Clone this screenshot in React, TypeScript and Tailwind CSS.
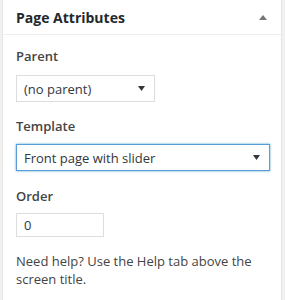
const font = { fontFamily: '"Open Sans", "Noto Sans", Arial, sans-serif' };

function Caret() {
  return (
    <svg width="7" height="5" viewBox="0 0 7 5" className="shrink-0">
      <path d="M0 0 H7 L3.5 5 Z" fill="#32373c" />
    </svg>
  );
}

function SelectBox({ value, width, focused }: { value: string; width: string; focused?: boolean }) {
  return (
    <div
      className={`flex h-[27px] items-center justify-between bg-white pl-[7px] pr-[9px] text-[13px] text-[#32373c] ${width} ${
        focused ? "border border-[#5b9dd9] shadow-[0_0_2px_rgba(30,140,190,0.8)]" : "border border-[#ddd]"
      }`}
    >
      <span>{value}</span>
      <Caret />
    </div>
  );
}

export default function App() {
  return (
    <div className="h-[300px] w-[285px] bg-[#f1f1f1] pl-[2px]" style={font}>
      <div className="h-[300px] w-[280px] border-x border-[#e5e5e5] bg-white">
        {/* Header */}
        <div className="flex h-[35px] items-center justify-between border-b border-[#eee] pl-[13px] pr-[14px]">
          <h2 className="text-[14px] font-bold text-[#23282d]">Page Attributes</h2>
          <svg width="8" height="5" viewBox="0 0 8 5">
            <path d="M0 5 L4 0 L8 5 Z" fill="#72777c" />
          </svg>
        </div>

        <div className="px-[13px] text-[13px] leading-[18px] text-[#444]">
          <p className="mt-[12px] font-semibold">Parent</p>
          <div className="mt-[10px]">
            <SelectBox value="(no parent)" width="w-[139px]" />
          </div>

          <p className="mt-[15px] font-semibold">Template</p>
          <div className="mt-[9px]">
            <SelectBox value="Front page with slider" width="w-[254px]" focused />
          </div>

          <p className="mt-[16px] font-semibold">Order</p>
          <div className="mt-[8px] flex h-[24px] w-[88px] items-center border border-[#ddd] bg-white pl-[7px] text-[13px] text-[#32373c]">
            0
          </div>

          <p className="mt-[15px]">Need help? Use the Help tab above the screen title.</p>
        </div>
      </div>
    </div>
  );
}
